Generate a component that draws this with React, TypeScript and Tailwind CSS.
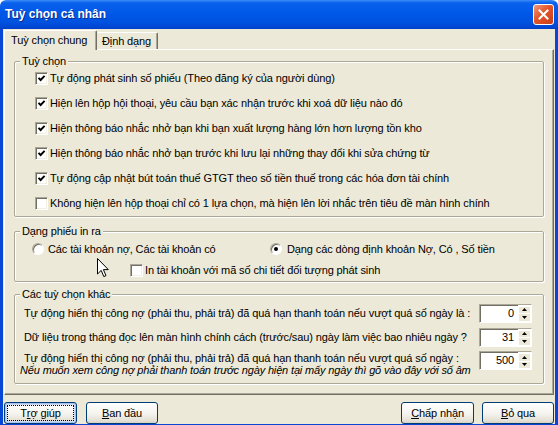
import { ReactNode } from "react";

function Check({ on }: { on?: boolean }) {
  return (
    <span className="w-[13px] h-[13px] shrink-0 bg-white border border-[#aca899] border-b-white border-r-white shadow-[inset_1px_1px_0_#716f64,inset_-1px_-1px_0_#f1efe2] flex items-center justify-center">
      {on && (
        <svg width="9" height="9" viewBox="0 0 9 9">
          <path d="M1.5 3.8 L3.6 6 L7.6 1.8" fill="none" stroke="#000" strokeWidth="1.9" />
        </svg>
      )}
    </span>
  );
}

function Radio({ on }: { on?: boolean }) {
  return (
    <span className="w-[12px] h-[12px] shrink-0 rounded-full bg-white border border-[#aca899] border-b-white border-r-white shadow-[inset_1px_1px_0_#716f64] flex items-center justify-center">
      {on && <span className="w-[4px] h-[4px] rounded-full bg-black" />}
    </span>
  );
}

function Spin({ value }: { value: string }) {
  return (
    <div className="flex h-[19px] w-[53px] shrink-0 bg-white border border-[#aca899] border-b-white border-r-white shadow-[inset_1px_1px_0_#716f64]">
      <div className="flex-1 flex items-center justify-end pr-[4px]">{value}</div>
      <div className="w-[13px] flex flex-col py-[1px] pr-[1px] bg-white">
        <div className="flex-1 flex items-center justify-center bg-[#ece9d8] border-t border-l border-white">
          <svg width="5" height="3" viewBox="0 0 5 3"><path d="M2.5 0 L5 3 L0 3 Z" fill="#000" /></svg>
        </div>
        <div className="flex-1 flex items-center justify-center bg-[#ece9d8] border-t border-l border-white">
          <svg width="5" height="3" viewBox="0 0 5 3"><path d="M0 0 L5 0 L2.5 3 Z" fill="#000" /></svg>
        </div>
      </div>
    </div>
  );
}

function Group({ title, children, className }: { title: string; children: ReactNode; className?: string }) {
  return (
    <fieldset className={"border border-[#aca899] rounded-[2px] shadow-[1px_1px_0_#fff,inset_1px_1px_0_#fff] " + (className ?? "")}>
      <legend className="ml-[5px] px-[2px] leading-[12px] bg-[#ece9d8] relative">{title}</legend>
      {children}
    </fieldset>
  );
}

function Btn({ children, w, def }: { children: ReactNode; w: string; def?: boolean }) {
  return (
    <button
      className={
        "h-[22px] rounded-[3px] border border-[#003c74] bg-[linear-gradient(to_bottom,#ffffff,#f4f3ee_55%,#e3dfd3_90%,#d6d0c5)] flex items-center justify-center p-[2px] " +
        w +
        (def ? " shadow-[inset_0_0_0_1px_#a9c2f0,inset_0_0_0_2px_#d0dcf5]" : "")
      }
    >
      <span className={"w-full h-full flex items-center justify-center " + (def ? "outline outline-1 outline-dotted outline-black -outline-offset-1" : "")}>
        {children}
      </span>
    </button>
  );
}

const opts: [boolean, string][] = [
  [true, "Tự động phát sinh số phiếu (Theo đăng ký của người dùng)"],
  [true, "Hiện lên hộp hội thoại, yêu cầu bạn xác nhận trước khi xoá dữ liệu nào đó"],
  [true, "Hiện thông báo nhắc nhở bạn khi bạn xuất lượng hàng lớn hơn lượng tồn kho"],
  [true, "Hiện thông báo nhắc nhở bạn trước khi lưu lại những thay đổi khi sửa chứng từ"],
  [true, "Tự động cập nhật bút toán thuế GTGT theo số tiền thuế trong các hóa đơn tài chính"],
  [false, "Không hiện lên hộp thoại chỉ có 1 lựa chọn, mà hiện lên lời nhắc trên tiêu đề màn hình chính"],
];

export default function App() {
  return (
    <div className="relative w-[558px] h-[425px] flex flex-col font-['Tahoma','Liberation_Sans',sans-serif] text-[11px] leading-[13px] tracking-[-0.12px] whitespace-nowrap text-black select-none">
      {/* title bar */}
      <div className="h-[29px] shrink-0 flex items-center pl-[5px] pr-[4px] rounded-t-[6px] bg-[linear-gradient(to_bottom,#3c8ef7_0%,#0a61ec_10%,#0058e8_45%,#0052e0_75%,#0047d4_92%,#003fc6_100%)]">
        <span className="text-white font-bold text-[12px] tracking-normal [text-shadow:1px_1px_0_#0b2a8a]">Tuỳ chọn cá nhân</span>
        <span className="ml-auto w-[21px] h-[21px] rounded-[3px] border border-white bg-[linear-gradient(135deg,#f09a7c,#e2552a_45%,#c83c17)] flex items-center justify-center">
          <svg width="11" height="11" viewBox="0 0 11 11">
            <path d="M1.5 1.5 L9.5 9.5 M9.5 1.5 L1.5 9.5" stroke="#fff" strokeWidth="2" strokeLinecap="square" />
          </svg>
        </span>
      </div>

      {/* body */}
      <div className="flex-1 flex flex-col bg-[#ece9d8] border-x-[3px] border-b-[3px] border-[#0846d6] px-[1px] pt-[1px]">
        {/* tabs */}
        <div className="flex items-end h-[19px] relative z-10">
          <div className="w-[93px] h-[20px] -mb-[1px] bg-[#ece9d8] border-t border-l border-white border-r border-r-[#716f64] shadow-[inset_-1px_0_0_#aca899] rounded-t-[2px] pl-[6px] flex items-center">
            Tuỳ chọn chung
          </div>
          <div className="w-[61px] h-[17px] bg-[#ece9d8] border-t border-white border-r border-r-[#716f64] shadow-[inset_-1px_0_0_#aca899] rounded-t-[2px] pl-[5px] flex items-center">
            Định dạng
          </div>
        </div>

        {/* tab page */}
        <div className="h-[346px] flex flex-col border border-white border-r-[#716f64] border-b-[#716f64] shadow-[inset_-1px_-1px_0_#aca899] px-[9px] pt-[5px]">
          <Group title="Tuỳ chọn">
            <div className="flex flex-col pl-[20px] -mt-[1px]">
              {opts.map(([on, t], i) => (
                <div key={i} className="h-[25px] flex items-center gap-[2px]">
                  <Check on={on} />
                  <span>{t}</span>
                </div>
              ))}
            </div>
          </Group>

          <Group title="Dạng phiếu in ra" className="mt-[8px]">
            <div className="flex flex-col">
              <div className="h-[24px] grid grid-cols-[238px_1fr] items-center pl-[17px]">
                <div className="flex items-center gap-[4px]">
                  <Radio />
                  <span>Các tài khoản nợ, Các tài khoản có</span>
                </div>
                <div className="flex items-center gap-[5px]">
                  <Radio on />
                  <span>Dạng các dòng định khoản Nợ, Có , Số tiền</span>
                </div>
              </div>
              <div className="h-[19px] flex items-center gap-[2px] pl-[115px] mb-[1px]">
                <Check />
                <span>In tài khoản với mã số chi tiết đối tượng phát sinh</span>
              </div>
            </div>
          </Group>

          <Group title="Các tuỳ chọn khác" className="mt-[6px]">
            <div className="flex flex-col pr-[11px] pb-[7px]">
              <div className="h-[24px] flex items-center justify-between pl-[9px] mt-[1px]">
                <span>Tự động hiển thị công nợ (phải thu, phải trả) đã quá hạn thanh toán nếu vượt quá số ngày là :</span>
                <Spin value="0" />
              </div>
              <div className="h-[24px] flex items-center justify-between pl-[9px]">
                <span>Dữ liệu trong tháng đọc lên màn hình chính cách (trước/sau) ngày làm việc bao nhiêu ngày ?</span>
                <Spin value="31" />
              </div>
              <div className="flex justify-between">
                <div className="flex flex-col pt-[3px] leading-[12px]">
                  <span className="pl-[9px]">Tự động hiển thị công nợ (phải thu, phải trả) đã quá hạn thanh toán nếu vượt quá số ngày :</span>
                  <span className="pl-[5px] italic tracking-[-0.15px]">Nếu muốn xem công nợ phải thanh toán trước ngày hiện tại mấy ngày thì gõ vào đây với số âm</span>
                </div>
                <div className="mt-[2px]">
                  <Spin value="500" />
                </div>
              </div>
            </div>
          </Group>
        </div>

        {/* buttons */}
        <div className="mt-[7px] flex justify-between">
          <div className="flex gap-[9px]">
            <Btn w="w-[73px]" def>T<u>r</u>ợ giúp</Btn>
            <Btn w="w-[72px]"><u>B</u>an đầu</Btn>
          </div>
          <div className="flex gap-[8px]">
            <Btn w="w-[73px]"><u>C</u>hấp nhận</Btn>
            <Btn w="w-[72px]"><u>B</u>ỏ qua</Btn>
          </div>
        </div>
      </div>

      {/* mouse pointer */}
      <svg className="absolute left-[97px] top-[258px]" width="12" height="20" viewBox="0 0 12 20">
        <path d="M0.5 0.5 L0.5 16 L4.2 12.4 L6.8 18.6 L9 17.6 L6.4 11.6 L11.3 11.6 Z" fill="#fff" stroke="#000" strokeWidth="1" strokeLinejoin="miter" />
      </svg>
    </div>
  );
}
